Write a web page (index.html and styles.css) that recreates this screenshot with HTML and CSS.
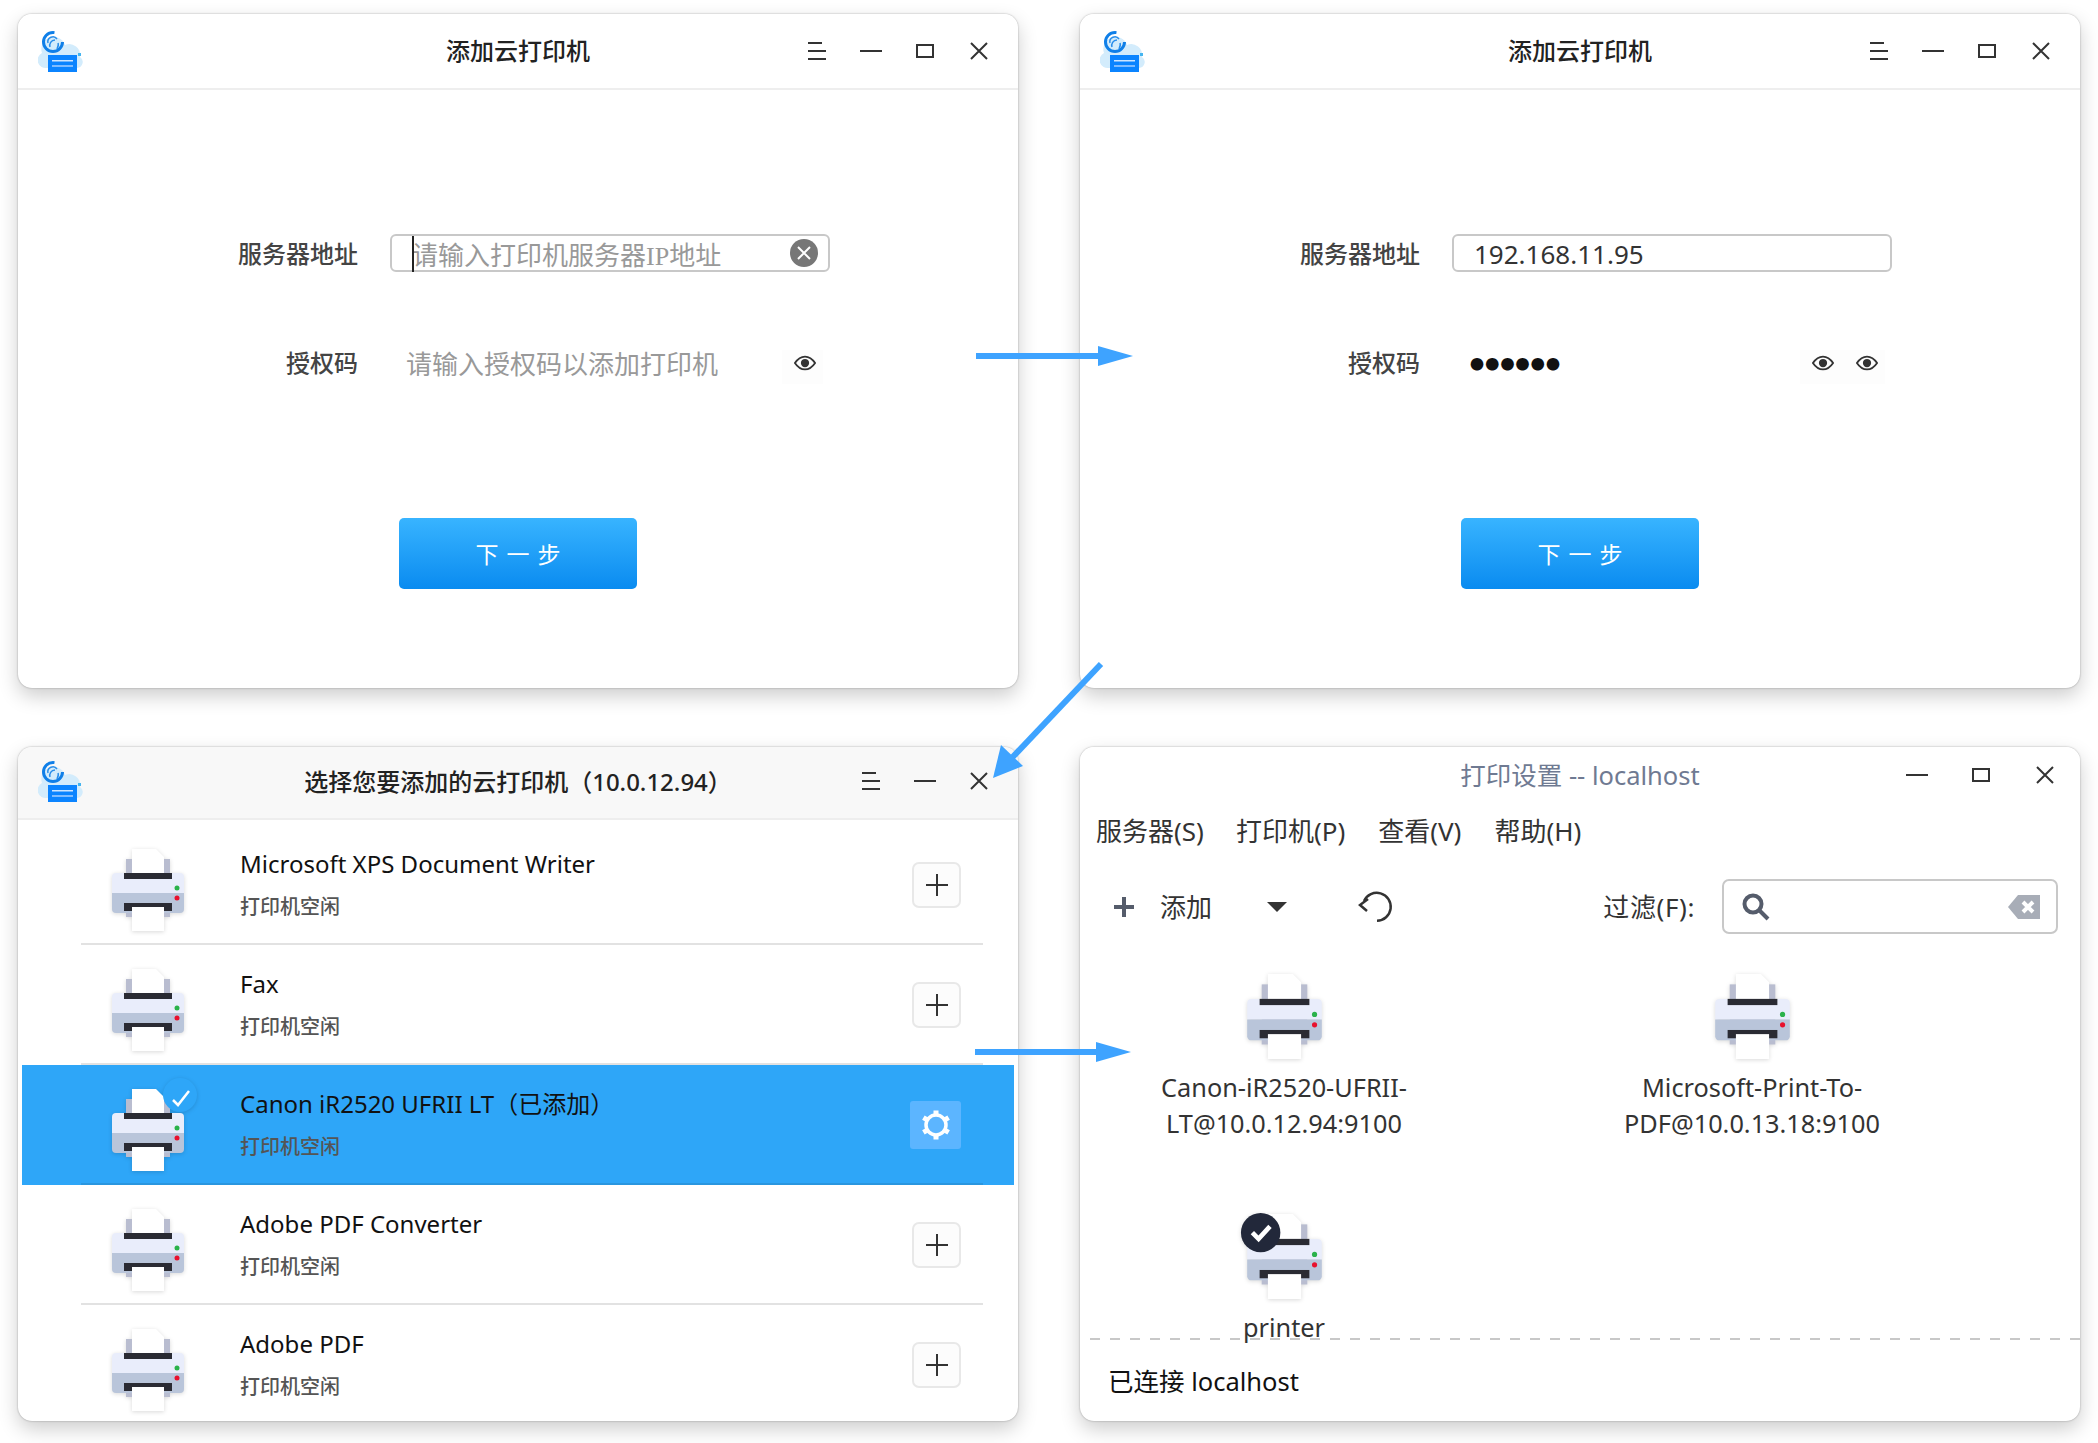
FILE: index.html
```html
<!DOCTYPE html>
<html lang="zh">
<head>
<meta charset="utf-8">
<title>添加云打印机</title>
<link rel="stylesheet" href="styles.css">
</head>
<body>
<svg class="defs" width="0" height="0" aria-hidden="true">
  <defs>
    <symbol id="printer" viewBox="0 0 72 82" overflow="visible">
      <rect x="14" y="10" width="44" height="58" fill="#b9bdd0"/>
      <path d="M20 0h24l8 8v20H20z" fill="#fff"/>
      <path d="M0 44V28a4 4 0 0 1 4-4h64a4 4 0 0 1 4 4v16z" fill="#e9edfb"/>
      <path d="M0 44h72v16a4 4 0 0 1-4 4H4a4 4 0 0 1-4-4z" fill="#b9c5da"/>
      <rect x="12" y="24" width="48" height="6" fill="#2a2b33"/>
      <rect x="12" y="54" width="48" height="8" fill="#2a2b33"/>
      <rect x="20" y="58" width="32" height="24" fill="#fff"/>
      <circle cx="65" cy="39" r="2.5" fill="#2bb24a"/>
      <circle cx="65" cy="49" r="2.5" fill="#e8112d"/>
    </symbol>
    <symbol id="logo" viewBox="0 0 46 42">
      <path d="M9 37a8 8 0 0 1-5-15 12 12 0 0 1 23-8 11 11 0 0 1 15 12 6 6 0 0 1-3 11z" fill="#d3ecfc"/>
      <circle cx="15" cy="11" r="9.500" fill="none" stroke="#0f7fe8" stroke-width="3" stroke-dasharray="46 14"/>
      <path d="M10 12a5 5 0 0 1 9-4M12 16c-1-3 1-7 5-7M20 12c1 2 0 4-1 6" fill="none" stroke="#2a8eea" stroke-width="1.500"/>
      <rect x="10" y="24" width="29" height="17" fill="#0b84ff"/>
      <rect x="14" y="29" width="21" height="1.500" fill="#cfe6ff"/>
      <rect x="14" y="34" width="21" height="2" fill="#7fbcff"/>
      <rect x="40" y="22" width="3" height="3" fill="#45b5f0"/>
    </symbol>
    <symbol id="eye" viewBox="0 0 24 18">
      <path d="M1 9c3-4.500 7-7 11-7s8 2.500 11 7c-3 4.500-7 7-11 7S4 13.500 1 9z" fill="none" stroke="#333" stroke-width="2"/>
      <circle cx="12" cy="9" r="4.500" fill="#333"/>
    </symbol>
    <symbol id="i-menu" viewBox="0 0 18 18">
      <path d="M0 1h14M0 9h18M0 17h18" stroke="#333" stroke-width="2"/>
    </symbol>
    <symbol id="i-min" viewBox="0 0 22 18">
      <path d="M0 9h22" stroke="#333" stroke-width="2"/>
    </symbol>
    <symbol id="i-max" viewBox="0 0 18 18">
      <rect x="1" y="3" width="16" height="12" fill="none" stroke="#333" stroke-width="2"/>
    </symbol>
    <symbol id="i-close" viewBox="0 0 18 18">
      <path d="M1 1l16 16M17 1L1 17" stroke="#333" stroke-width="2"/>
    </symbol>
    <symbol id="i-plus" viewBox="0 0 24 24">
      <path d="M12 1v22M1 12h22" stroke="#333" stroke-width="2"/>
    </symbol>
  </defs>
</svg>

<main class="desktop">

  <section class="window">
    <header class="titlebar">
      <svg class="logo"><use href="#logo"/></svg>
      <h1 class="title">添加云打印机</h1>
      <div class="controls">
        <span class="ctl"><svg class="ic-18"><use href="#i-menu"/></svg></span>
        <span class="ctl"><svg class="ic-22"><use href="#i-min"/></svg></span>
        <span class="ctl"><svg class="ic-18"><use href="#i-max"/></svg></span>
        <span class="ctl"><svg class="ic-18"><use href="#i-close"/></svg></span>
      </div>
    </header>
    <div class="form">
      <div class="field">
        <label class="label">服务器地址</label>
        <div class="input">
          <span class="caret-bar"></span>
          <span class="placeholder">请输入打印机服务器<span class="serif">IP</span>地址</span>
          <svg class="clear" viewBox="0 0 28 28"><circle cx="14" cy="14" r="14" fill="#777"/><path d="M8 8l12 12M20 8L8 20" stroke="#fff" stroke-width="2"/></svg>
        </div>
      </div>
      <div class="field">
        <label class="label">授权码</label>
        <div class="input plain">
          <span class="placeholder">请输入授权码以添加打印机</span>
          <span class="eyes"><svg class="eye"><use href="#eye"/></svg></span>
        </div>
      </div>
      <button class="next">下一步</button>
    </div>
  </section>

  <section class="window">
    <header class="titlebar">
      <svg class="logo"><use href="#logo"/></svg>
      <h1 class="title">添加云打印机</h1>
      <div class="controls">
        <span class="ctl"><svg class="ic-18"><use href="#i-menu"/></svg></span>
        <span class="ctl"><svg class="ic-22"><use href="#i-min"/></svg></span>
        <span class="ctl"><svg class="ic-18"><use href="#i-max"/></svg></span>
        <span class="ctl"><svg class="ic-18"><use href="#i-close"/></svg></span>
      </div>
    </header>
    <div class="form">
      <div class="field">
        <label class="label">服务器地址</label>
        <div class="input"><span class="value">192.168.11.95</span></div>
      </div>
      <div class="field">
        <label class="label">授权码</label>
        <div class="input plain">
          <span class="dots">●●●●●●</span>
          <span class="eyes two">
            <svg class="eye"><use href="#eye"/></svg>
            <svg class="eye"><use href="#eye"/></svg>
          </span>
        </div>
      </div>
      <button class="next">下一步</button>
    </div>
  </section>

  <section class="window">
    <header class="titlebar grey">
      <svg class="logo"><use href="#logo"/></svg>
      <h1 class="title">选择您要添加的云打印机（10.0.12.94）</h1>
      <div class="controls">
        <span class="ctl"><svg class="ic-18"><use href="#i-menu"/></svg></span>
        <span class="ctl"><svg class="ic-22"><use href="#i-min"/></svg></span>
        <span class="ctl"><svg class="ic-18"><use href="#i-close"/></svg></span>
      </div>
    </header>
    <ul class="list">
      <li class="row">
        <svg class="pr"><use href="#printer"/></svg>
        <div class="info"><div class="name">Microsoft XPS Document Writer</div><div class="sub">打印机空闲</div></div>
        <span class="add"><svg class="ic-24"><use href="#i-plus"/></svg></span>
      </li>
      <li class="row">
        <svg class="pr"><use href="#printer"/></svg>
        <div class="info"><div class="name">Fax</div><div class="sub">打印机空闲</div></div>
        <span class="add"><svg class="ic-24"><use href="#i-plus"/></svg></span>
      </li>
      <li class="row selected">
        <svg class="pr" viewBox="0 0 72 82">
          <use href="#printer" width="72" height="82"/>
          <circle cx="68" cy="6" r="17" fill="#2ea6f8"/>
          <path d="M61 11l5 5 11-14" fill="none" stroke="#fff" stroke-width="2.500"/>
        </svg>
        <div class="info"><div class="name">Canon iR2520 UFRII LT（已添加）</div><div class="sub">打印机空闲</div></div>
        <span class="gear">
          <svg class="ic-30" viewBox="0 0 30 30"><circle cx="15" cy="15" r="10" fill="none" stroke="#fff" stroke-width="3.500"/><path d="M15 .500v5M15 24.500v5M2.400 7.700l4.300 2.500M23.300 19.800l4.300 2.500M2.400 22.300l4.300-2.500M23.300 10.200l4.300-2.500" stroke="#fff" stroke-width="5"/></svg>
        </span>
      </li>
      <li class="row">
        <svg class="pr"><use href="#printer"/></svg>
        <div class="info"><div class="name">Adobe PDF Converter</div><div class="sub">打印机空闲</div></div>
        <span class="add"><svg class="ic-24"><use href="#i-plus"/></svg></span>
      </li>
      <li class="row">
        <svg class="pr"><use href="#printer"/></svg>
        <div class="info"><div class="name">Adobe PDF</div><div class="sub">打印机空闲</div></div>
        <span class="add"><svg class="ic-24"><use href="#i-plus"/></svg></span>
      </li>
    </ul>
  </section>

  <section class="window settings">
    <header class="titlebar short">
      <span class="spacer"></span>
      <h1 class="title muted">打印设置 -- localhost</h1>
      <div class="controls wide">
        <span class="ctl"><svg class="ic-22"><use href="#i-min"/></svg></span>
        <span class="ctl"><svg class="ic-18"><use href="#i-max"/></svg></span>
        <span class="ctl"><svg class="ic-18"><use href="#i-close"/></svg></span>
      </div>
    </header>
    <nav class="menubar">
      <span>服务器(S)</span><span>打印机(P)</span><span>查看(V)</span><span>帮助(H)</span>
    </nav>
    <div class="toolbar">
      <svg class="tb-plus" viewBox="0 0 22 22"><path d="M11 1v20M1 11h20" stroke="#555c6b" stroke-width="4"/></svg>
      <span class="tb-add">添加</span>
      <svg class="tb-caret" viewBox="0 0 20 10"><path d="M0 0h20l-10 10z" fill="#333"/></svg>
      <svg class="tb-refresh" viewBox="0 0 34 28"><path d="M7 8A14 14 0 1 1 20 27.800" fill="none" stroke="#333" stroke-width="2.500"/><path d="M11 6l-8 6 7 6" fill="none" stroke="#333" stroke-width="2.500"/></svg>
      <span class="tb-filter">过滤(F):</span>
      <div class="search">
        <svg class="s-icon" viewBox="0 0 28 28"><circle cx="11" cy="11" r="8.500" fill="none" stroke="#555c6b" stroke-width="4"/><path d="M17 17l9 9" stroke="#555c6b" stroke-width="4"/></svg>
        <svg class="s-clear" viewBox="0 0 32 24"><path d="M10 0h22v24H10L0 12z" fill="#a8adb7"/><path d="M15 7l10 10M25 7L15 17" stroke="#fff" stroke-width="4"/></svg>
      </div>
    </div>
    <div class="grid">
      <div class="item">
        <svg class="pr-lg"><use href="#printer"/></svg>
        <div class="cap">Canon-iR2520-UFRII-<br>LT@10.0.12.94:9100</div>
      </div>
      <div class="item">
        <svg class="pr-lg"><use href="#printer"/></svg>
        <div class="cap">Microsoft-Print-To-<br>PDF@10.0.13.18:9100</div>
      </div>
      <div class="item">
        <svg class="pr-lg" viewBox="0 0 72 82">
          <use href="#printer" width="72" height="82"/>
          <circle cx="13" cy="18" r="19" fill="#22283a"/>
          <path d="M5 18l6 6 11-12" fill="none" stroke="#fff" stroke-width="4.500"/>
        </svg>
        <div class="cap">printer</div>
      </div>
    </div>
    <footer class="status">已连接 localhost</footer>
  </section>

</main>

<svg class="arrows" viewBox="0 0 2098 1443" aria-hidden="true">
  <path d="M976 356h125" stroke="#3ea3ff" stroke-width="6"/>
  <path d="M1098 346l35 10-35 10z" fill="#3ea3ff"/>
  <path d="M1101 664L1008 762" stroke="#3ea3ff" stroke-width="6"/>
  <path d="M993 778l8-33 22 21z" fill="#3ea3ff"/>
  <path d="M975 1052h125" stroke="#3ea3ff" stroke-width="6"/>
  <path d="M1096 1042l35 10-35 10z" fill="#3ea3ff"/>
</svg>
</body>
</html>
```
FILE: styles.css
```css
* { box-sizing: border-box; }
html, body { margin: 0; padding: 0; background: #fff; }
body {
  position: relative;
  width: 2098px;
  height: 1443px;
  overflow: hidden;
  font-family: "Noto Sans", "Noto Sans CJK SC", sans-serif;
  color: #222;
}
.defs { position: absolute; }
.arrows { position: absolute; left: 0; top: 0; width: 2098px; height: 1443px; pointer-events: none; }

.desktop {
  display: grid;
  grid-template-columns: 1000px 1000px;
  grid-template-rows: 674px 674px;
  column-gap: 62px;
  row-gap: 59px;
  padding: 14px 0 0 18px;
}
.window {
  display: flex;
  flex-direction: column;
  background: #fff;
  border-radius: 14px;
  overflow: hidden;
  box-shadow: 0 0 2px rgba(0, 0, 0, .35), 0 8px 20px rgba(0, 0, 0, .2);
}

.titlebar {
  display: grid;
  grid-template-columns: 1fr auto 1fr;
  align-items: center;
  flex: none;
  height: 76px;
  border-bottom: 2px solid #eee;
  background: #fff;
}
.titlebar.grey { height: 73px; background: #f8f8f8; padding-bottom: 3px; }
.titlebar.short { height: 56px; border-bottom: 0; }
.logo { width: 46px; height: 42px; margin: 2px 0 0 20px; display: block; }
.title { margin: -3px 0 0; font-size: 24px; font-weight: 500; color: #222; white-space: nowrap; }
.titlebar.grey .title { margin-top: -2px; }
.title.muted { font-size: 25.500px; font-weight: 400; color: #6f7a92; }
.controls { display: flex; justify-content: flex-end; padding-right: 12px; }
.controls.wide { padding-right: 3px; }
.ctl { width: 54px; height: 24px; display: flex; align-items: center; justify-content: center; }
.controls.wide .ctl { width: 64px; }
.ic-18 { width: 18px; height: 18px; }
.ic-22 { width: 22px; height: 18px; }
.ic-24 { width: 24px; height: 24px; }
.ic-30 { width: 30px; height: 30px; }

.form { display: flex; flex-direction: column; padding: 144px 0 0 0; }
.field { display: flex; align-items: center; height: 38px; margin-bottom: 71px; }
.label { width: 340px; padding-top: 2px; text-align: right; font-size: 24px; font-weight: 500; color: #444; line-height: 38px; }
.input {
  position: relative;
  display: flex;
  align-items: center;
  width: 440px;
  height: 38px;
  margin-left: 32px;
  padding: 2px 0 0 20px;
  border: 2px solid #c8c8c8;
  border-radius: 6px;
}
.input.plain { border-color: transparent; padding-left: 14px; }
.placeholder { font-size: 26px; color: #999; white-space: nowrap; }
.serif { font-family: "Liberation Serif", serif; }
.caret-bar { position: absolute; left: 20px; top: 0; bottom: -2px; width: 2px; background: #222; }
.clear { position: absolute; right: 10px; top: 3px; width: 28px; height: 28px; }
.value { font-size: 26px; color: #333; white-space: nowrap; }
.dots { font-size: 14px; letter-spacing: 1.200px; color: #111; white-space: nowrap; margin-left: 2px; }
.eyes {
  position: absolute;
  right: 5px;
  top: 5px;
  display: flex;
  justify-content: flex-end;
  gap: 22px;
  padding: 4px 7px 12px 12px;
  background: #fdfdfd;
}
.eye { width: 22px; height: 18px; display: block; }

.next {
  align-self: center;
  width: 238px;
  height: 71px;
  margin-top: 66px;
  border: 0;
  border-radius: 5px;
  background: linear-gradient(180deg, #38b4ff, #0a8bf0);
  color: #fff;
  font: 400 23px "Noto Sans", "Noto Sans CJK SC", sans-serif;
  letter-spacing: 8px;
  padding: 0 0 2px 8px;
}

.list { list-style: none; margin: 0; padding: 5px 4px 0; flex: 1; overflow: hidden; }
.row {
  position: relative;
  display: flex;
  align-items: flex-start;
  height: 120px;
  padding: 24px 53px 0 90px;
}
.row::after {
  content: "";
  position: absolute;
  left: 59px;
  right: 31px;
  bottom: 0;
  height: 2px;
  background: #e2e2e2;
}
.row.selected { background: #2ea6f8; }
.row.selected::after { background: #2a96df; }
.pr { width: 72px; height: 82px; flex: none; overflow: visible; filter: drop-shadow(0 1px 2px rgba(0, 0, 0, .15)); }
.info { margin: -2px 0 0 56px; }
.name { font-size: 24px; line-height: 34px; color: #111; white-space: nowrap; }
.sub { margin-top: 12px; font-size: 20px; font-weight: 500; line-height: 28px; color: #555; }
.add {
  margin-left: auto;
  margin-top: 13px;
  width: 49px;
  height: 46px;
  display: flex;
  align-items: center;
  justify-content: center;
  background: #fcfcfc;
  border: 2px solid #e8e8e8;
  border-radius: 7px;
}
.gear {
  margin-left: auto;
  margin-top: 12px;
  width: 51px;
  height: 48px;
  display: flex;
  align-items: center;
  justify-content: center;
  background: #5cb5ff;
  border-radius: 3px;
}

.menubar { display: flex; flex: none; gap: 33px; height: 54px; padding-left: 16px; align-items: center; font-size: 26px; color: #333; }
.menubar span { white-space: nowrap; }
.menubar span:first-child { margin-right: -1px; }
.toolbar { display: flex; flex: none; align-items: center; height: 55px; margin-top: 22px; padding: 0 22px 0 33px; font-size: 26px; color: #333; }
.tb-plus { width: 22px; height: 22px; }
.tb-add { margin: -2px 0 0 25px; }
.tb-caret { width: 20px; height: 10px; margin-left: 55px; }
.tb-refresh { width: 34px; height: 28px; margin-left: 70px; overflow: visible; }
.tb-filter { margin: -2px 0 0 auto; letter-spacing: .6px; }
.search {
  display: flex;
  align-items: center;
  justify-content: space-between;
  width: 336px;
  height: 55px;
  margin-left: 27px;
  padding: 0 16px 0 18px;
  border: 2px solid #c8c8c8;
  border-radius: 7px;
}
.s-icon { width: 28px; height: 28px; }
.s-clear { width: 32px; height: 24px; }

.grid {
  flex: 1;
  min-height: 0;
  display: grid;
  grid-template-columns: 400px 400px;
  grid-auto-rows: 240px;
  column-gap: 68px;
  align-content: start;
  padding: 40px 0 0 4px;
}
.item { display: flex; flex-direction: column; align-items: center; }
.pr-lg { width: 75px; height: 85px; overflow: visible; flex: none; filter: drop-shadow(0 1px 2px rgba(0, 0, 0, .15)); }
.cap { margin-top: 10px; font-size: 25.300px; line-height: 36px; color: #333; text-align: center; white-space: nowrap; }
.status {
  flex: none;
  height: 83px;
  margin-left: 10px;
  padding: 25px 0 0 18px;
  background: repeating-linear-gradient(90deg, #c8c8c8 0 10px, transparent 10px 20px) top / 100% 2px no-repeat;
  font-size: 25.500px;
  line-height: 36px;
  color: #111;
}
```
